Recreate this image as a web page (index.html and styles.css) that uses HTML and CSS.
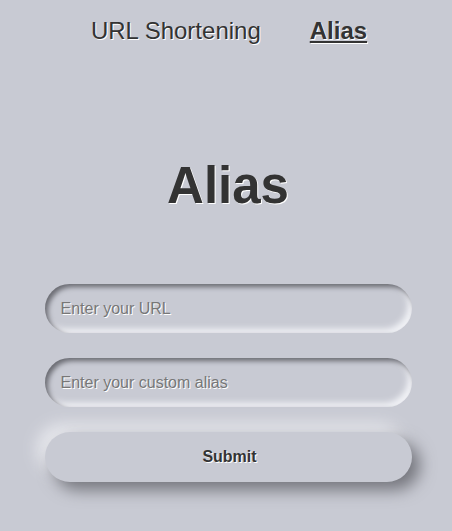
FILE: index.html
```html
<!DOCTYPE html>
<html lang="en">
<head>
<meta charset="utf-8">
<title>Alias</title>
<link rel="stylesheet" href="styles.css">
</head>
<body>
  <nav class="nav">
    <a class="nav-link" href="#">URL Shortening</a>
    <a class="nav-link active" href="#">Alias</a>
  </nav>
  <main class="main">
    <h1 class="title">Alias</h1>
    <form class="form">
      <input class="field" type="text" placeholder="Enter your URL">
      <input class="field" type="text" placeholder="Enter your custom alias">
      <button class="submit" type="button">Submit</button>
    </form>
  </main>
</body>
</html>
```
FILE: styles.css
```css
html, body {
  margin: 0;
  padding: 0;
  background: #c8cad3;
  height: 100%;
}
body {
  font-family: "Liberation Sans", Arial, sans-serif;
  color: #333;
}
.nav {
  display: flex;
  justify-content: center;
  gap: 49px;
  padding-top: 16px;
  padding-left: 6px;
}
.nav-link {
  font-size: 24px;
  line-height: 30px;
  color: #333;
  text-decoration: none;
  text-shadow: 1px 1px 0 #fff;
}
.nav-link.active {
  font-weight: bold;
  text-decoration: underline;
}
.main {
  display: flex;
  flex-direction: column;
  align-items: center;
}
.title {
  margin: 110px 0 0 0;
  font-size: 51px;
  line-height: 60px;
  font-weight: bold;
  color: #333;
  text-shadow: 1px 1px 0 #fff;
  padding-left: 4px;
}
.form {
  margin-top: 68px;
  display: flex;
  flex-direction: column;
  gap: 25px;
  width: 367px;
  padding-left: 4px;
}
.field {
  box-sizing: border-box;
  height: 49px;
  width: 100%;
  border: none;
  outline: none;
  border-radius: 25px;
  background: #c8cad3;
  padding: 0 16px;
  font-family: "Liberation Sans", Arial, sans-serif;
  font-size: 16px;
  color: #333;
  box-shadow: inset 3px 3px 5px #6a6b72, inset -4px -4px 6px #f2f3f7;
}
.field::placeholder {
  color: #777;
  text-shadow: 1px 1px 0 #fff;
}
.submit {
  box-sizing: border-box;
  height: 50px;
  width: 100%;
  border: none;
  border-radius: 25px;
  background: #c8cad3;
  font-family: "Liberation Sans", Arial, sans-serif;
  font-size: 16px;
  font-weight: bold;
  color: #333;
  padding-left: 9px;
  text-shadow: 1px 1px 0 #fff;
  box-shadow: 8px 8px 16px #75767d, -8px -8px 16px #e8e9ee;
}
```
